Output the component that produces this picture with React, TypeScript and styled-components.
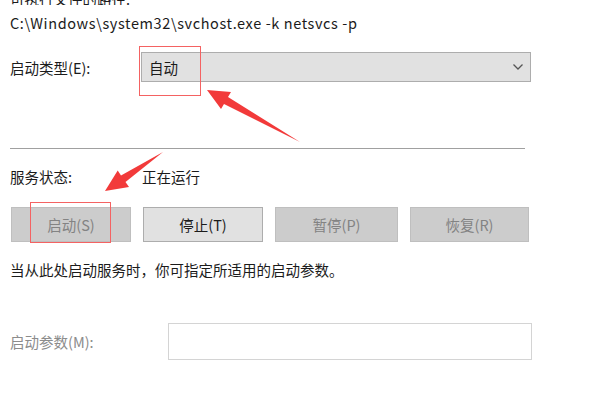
import React from "react";
import styled, { createGlobalStyle } from "styled-components";

const GlobalStyle = createGlobalStyle`
  html, body {
    margin: 0;
    padding: 0;
    background: #ffffff;
  }
  body {
    font-family: "Noto Sans CJK SC", "Noto Sans", sans-serif;
    color: #1b1b1b;
  }
`;

const Page = styled.div`
  position: relative;
  width: 610px;
  height: 393px;
  overflow: hidden;
  background: #fff;
  padding-left: 10px;
  box-sizing: border-box;
  display: flex;
  flex-direction: column;
  font-size: 14.5px;
`;

const CutLabel = styled.div`
  height: 12px;
  line-height: 12px;
  margin-top: -7px;
  overflow: hidden;
`;

const PathText = styled.div`
  margin-top: 8px;
  height: 20px;
  line-height: 20px;
  letter-spacing: 0.6px;
`;

const FieldRow = styled.div<{ $top: number; $labelWidth: number; $height: number }>`
  display: flex;
  align-items: center;
  margin-top: ${(p) => p.$top}px;
  height: ${(p) => p.$height}px;

  & > label {
    width: ${(p) => p.$labelWidth}px;
    flex: none;
  }
`;

const Label = styled.label<{ $muted?: boolean }>`
  color: ${(p) => (p.$muted ? "#8c8c8c" : "#1b1b1b")};
`;

const Combo = styled.div`
  flex: none;
  width: 390px;
  height: 30px;
  box-sizing: border-box;
  background: #e1e1e1;
  border: 1px solid #adadad;
  display: flex;
  align-items: center;
  justify-content: space-between;
  padding: 0 6px 0 7px;
`;

const Separator = styled.div`
  margin-top: 66px;
  width: 515px;
  height: 1px;
  background: #a0a0a0;
`;

const StatusRow = styled.div`
  display: flex;
  align-items: center;
  margin-top: 17px;
  height: 20px;
`;

const StatusLabel = styled.span`
  width: 132px;
`;

const ButtonRow = styled.div`
  display: flex;
  gap: 12px;
  margin-top: 21px;
  margin-left: 1px;
`;

const Button = styled.div<{ $w: number; $disabled?: boolean }>`
  width: ${(p) => p.$w}px;
  height: 35px;
  box-sizing: border-box;
  display: flex;
  align-items: center;
  justify-content: center;
  background: ${(p) => (p.$disabled ? "#cccccc" : "#e1e1e1")};
  border: 1px solid ${(p) => (p.$disabled ? "#bfbfbf" : "#adadad")};
  color: ${(p) => (p.$disabled ? "#838383" : "#1b1b1b")};
  font-size: 14.5px;
`;

const Hint = styled.div`
  margin-top: 18px;
  height: 20px;
  line-height: 20px;
`;

const Input = styled.div`
  flex: none;
  width: 364px;
  height: 37px;
  box-sizing: border-box;
  border: 1px solid #d4d4d4;
  background: #fff;
`;

const Overlay = styled.svg`
  position: absolute;
  left: 0;
  top: 0;
  pointer-events: none;
`;

const Highlight = styled.div<{ $x: number; $y: number; $w: number; $h: number }>`
  position: absolute;
  left: ${(p) => p.$x}px;
  top: ${(p) => p.$y}px;
  width: ${(p) => p.$w}px;
  height: ${(p) => p.$h}px;
  box-sizing: border-box;
  border: 1.5px solid #f46262;
`;

function Chevron() {
  return (
    <svg width="12" height="8" viewBox="0 0 12 8">
      <path d="M1.5 1.5 L6 6 L10.5 1.5" fill="none" stroke="#555" strokeWidth="1.3" />
    </svg>
  );
}

export default function App() {
  return (
    <>
      <GlobalStyle />
      <Page>
        <CutLabel>可执行文件的路径:</CutLabel>
        <PathText>C:\Windows\system32\svchost.exe -k netsvcs -p</PathText>

        <FieldRow $top={19} $labelWidth={131} $height={30}>
          <Label>启动类型(E):</Label>
          <Combo>
            <span>自动</span>
            <Chevron />
          </Combo>
        </FieldRow>

        <Separator />

        <StatusRow>
          <StatusLabel>服务状态:</StatusLabel>
          <span>正在运行</span>
        </StatusRow>

        <ButtonRow>
          <Button $w={120} $disabled>启动(S)</Button>
          <Button $w={120}>停止(T)</Button>
          <Button $w={123} $disabled>暂停(P)</Button>
          <Button $w={119} $disabled>恢复(R)</Button>
        </ButtonRow>

        <Hint>当从此处启动服务时，你可指定所适用的启动参数。</Hint>

        <FieldRow $top={43} $labelWidth={158} $height={37}>
          <Label $muted>启动参数(M):</Label>
          <Input />
        </FieldRow>

        <Highlight $x={139} $y={46} $w={62} $h={50} />
        <Highlight $x={30} $y={202} $w={81} $h={41} />

        <Overlay width="610" height="393" viewBox="0 0 610 393">
          <polygon
            points="207,90 231,92 228,97 300,142 224,104 221,109"
            fill="#f23a3a"
          />
          <polygon
            points="105,191 129,187 125.5,182 163,152 121,175.4 117.7,170.4"
            fill="#f23a3a"
          />
        </Overlay>
      </Page>
    </>
  );
}
